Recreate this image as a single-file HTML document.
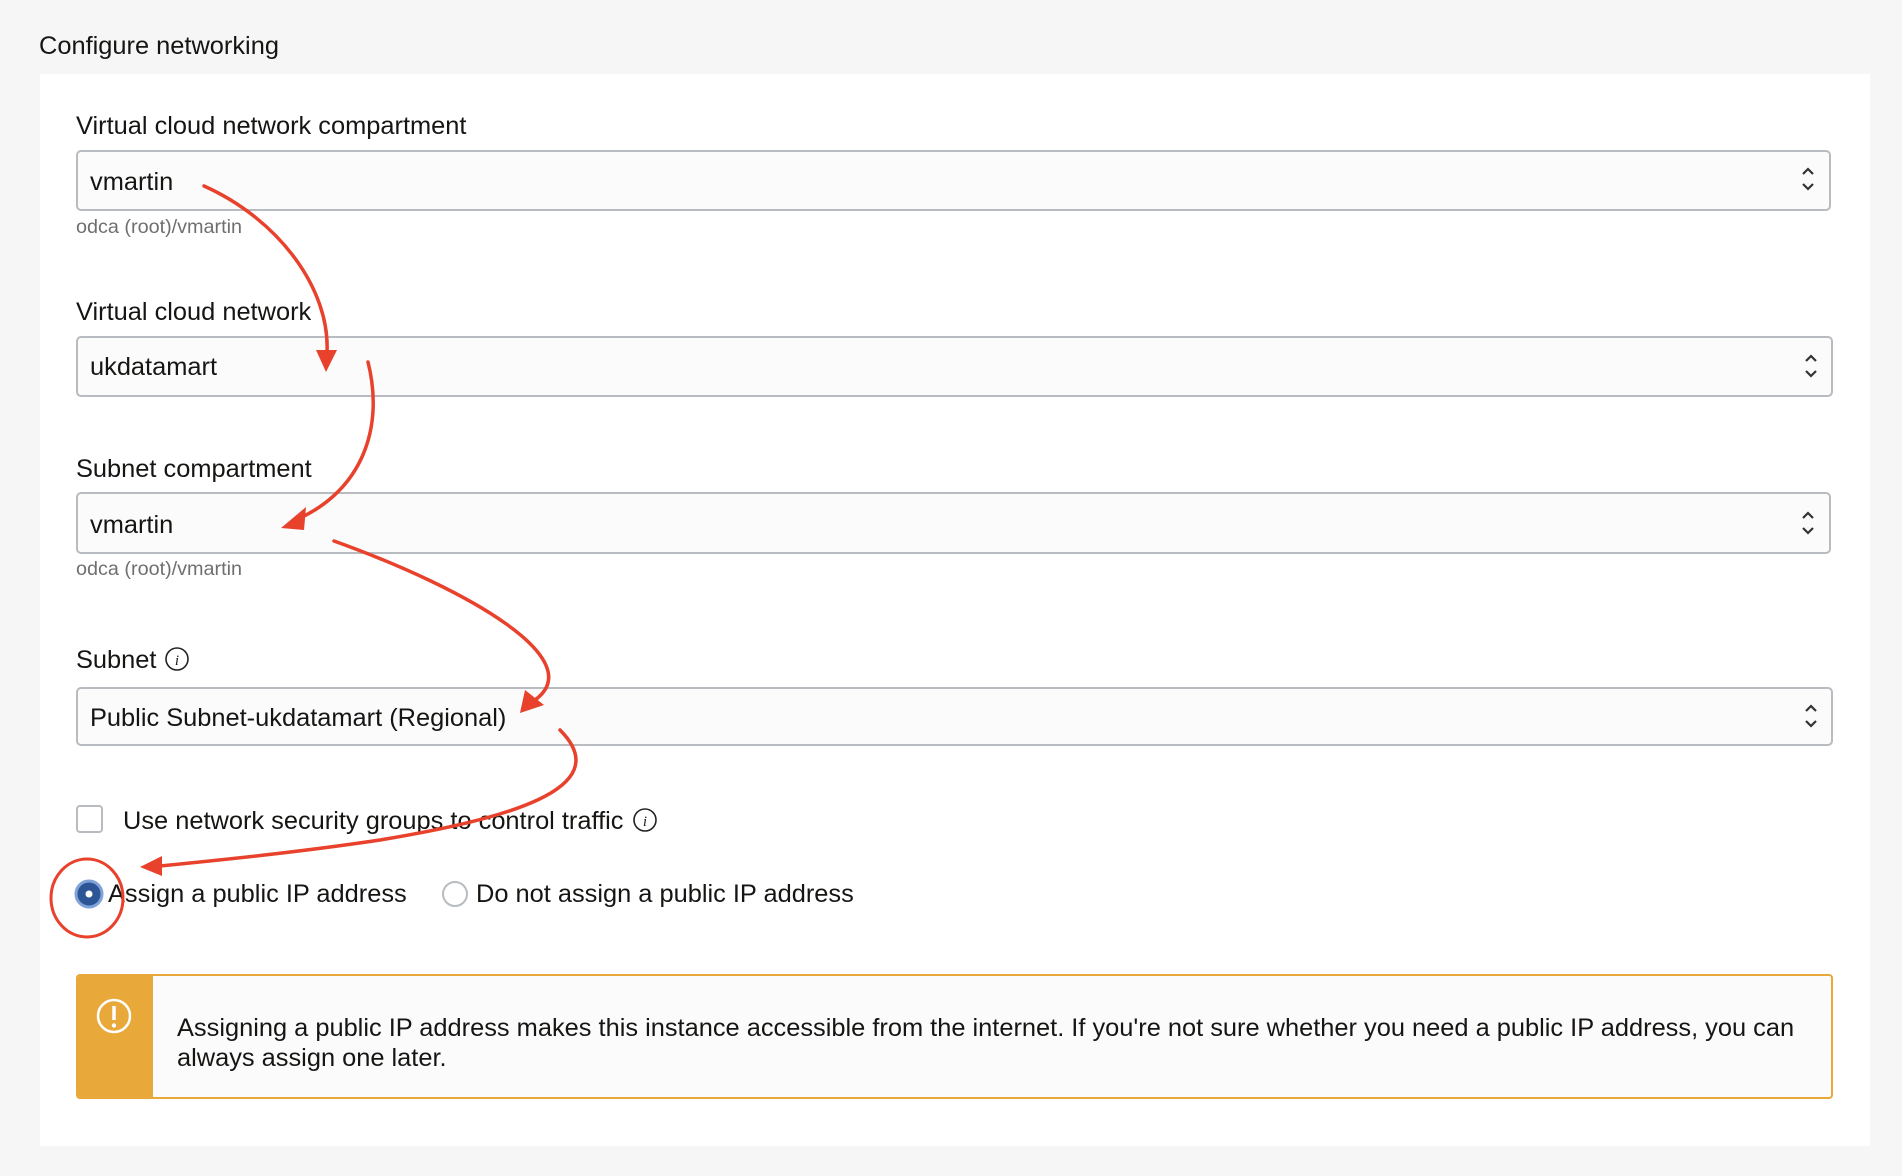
<!DOCTYPE html>
<html><head><meta charset="utf-8"><style>
*{margin:0;padding:0;box-sizing:border-box}
body{width:1902px;height:1176px;background:#f6f6f6;font-family:"Liberation Sans",Arial,sans-serif;color:#161513;position:relative;overflow:hidden}
.a{position:absolute;white-space:nowrap}
.t{font-size:25.4px;line-height:28px}
.panel{position:absolute;left:40px;top:74px;width:1830px;height:1072px;background:#fff}
.inp{position:absolute;left:76px;border:2px solid #b8bbbf;border-radius:5px;background:#fbfbfb}
.hint{font-size:19.8px;color:#6f6f6f}
.chev{position:absolute;width:14px;height:30px}
.ic{display:inline-block;vertical-align:middle;margin-left:8px;margin-top:-4px}
</style></head><body>
<div class="a" style="left:39px;top:32px;font-size:25.4px;line-height:28px">Configure networking</div>
<div class="panel"></div>

<div class="a t" style="left:76px;top:112px">Virtual cloud network compartment</div>
<div class="inp" style="top:150px;width:1755px;height:61px"></div>
<div class="a t" style="left:90px;top:168px">vmartin</div>
<svg class="chev" style="left:1801px;top:164px" viewBox="0 0 14 30"><path d="M2 10 L7 5 L12 10 M2 20 L7 25 L12 20" fill="none" stroke="#333" stroke-width="2.2"/></svg>
<div class="a hint" style="left:76px;top:216px">odca (root)/vmartin</div>

<div class="a t" style="left:76px;top:298px">Virtual cloud network</div>
<div class="inp" style="top:336px;width:1757px;height:61px"></div>
<div class="a t" style="left:90px;top:353px">ukdatamart</div>
<svg class="chev" style="left:1804px;top:351px" viewBox="0 0 14 30"><path d="M2 10 L7 5 L12 10 M2 20 L7 25 L12 20" fill="none" stroke="#333" stroke-width="2.2"/></svg>

<div class="a t" style="left:76px;top:455px">Subnet compartment</div>
<div class="inp" style="top:492px;width:1755px;height:62px"></div>
<div class="a t" style="left:90px;top:511px">vmartin</div>
<svg class="chev" style="left:1801px;top:508px" viewBox="0 0 14 30"><path d="M2 10 L7 5 L12 10 M2 20 L7 25 L12 20" fill="none" stroke="#333" stroke-width="2.2"/></svg>
<div class="a hint" style="left:76px;top:558px">odca (root)/vmartin</div>

<div class="a t" style="left:76px;top:646px">Subnet<svg class="ic" width="26" height="26" viewBox="0 0 26 26"><circle cx="13" cy="13" r="11" fill="none" stroke="#222" stroke-width="1.6"/><text x="13" y="19" font-family="Liberation Serif" font-style="italic" font-size="15" text-anchor="middle" fill="#222">i</text></svg></div>
<div class="inp" style="top:687px;width:1757px;height:59px"></div>
<div class="a t" style="left:90px;top:704px">Public Subnet-ukdatamart (Regional)</div>
<svg class="chev" style="left:1804px;top:701px" viewBox="0 0 14 30"><path d="M2 10 L7 5 L12 10 M2 20 L7 25 L12 20" fill="none" stroke="#333" stroke-width="2.2"/></svg>

<div class="a" style="left:76px;top:805px;width:27px;height:28px;border:2px solid #b8bbbf;border-radius:4px;background:#fff"></div>
<div class="a t" style="left:123px;top:807px">Use network security groups to control traffic<svg class="ic" width="26" height="26" viewBox="0 0 26 26"><circle cx="13" cy="13" r="11" fill="none" stroke="#222" stroke-width="1.6"/><text x="13" y="19" font-family="Liberation Serif" font-style="italic" font-size="15" text-anchor="middle" fill="#222">i</text></svg></div>

<svg class="a" style="left:74px;top:879px" width="30" height="30" viewBox="0 0 30 30"><circle cx="15" cy="15" r="13" fill="#2c5595" stroke="#7fa3d8" stroke-width="3"/><circle cx="15" cy="15" r="3.5" fill="#fff"/></svg>
<div class="a t" style="left:108px;top:880px">Assign a public IP address</div>
<svg class="a" style="left:441px;top:880px" width="28" height="28" viewBox="0 0 28 28"><circle cx="14" cy="14" r="12" fill="#fff" stroke="#b8bbbf" stroke-width="2"/></svg>
<div class="a t" style="left:476px;top:880px">Do not assign a public IP address</div>

<div class="a" style="left:76px;top:974px;width:1757px;height:125px;border:2px solid #e8a83a;border-radius:4px;background:#fbfbfb;overflow:hidden">
 <div style="position:absolute;left:0;top:0;width:75px;height:100%;background:#e8a83a"></div>
</div>
<svg class="a" style="left:95px;top:997px" width="38" height="38" viewBox="0 0 38 38"><circle cx="19" cy="19" r="16" fill="none" stroke="#fff" stroke-width="2.5"/><path d="M19 9 V23" stroke="#fff" stroke-width="3.5"/><circle cx="19" cy="28.5" r="2.2" fill="#fff"/></svg>
<div class="a t" style="left:177px;top:1013px;line-height:30px;white-space:normal;width:1640px">Assigning a public IP address makes this instance accessible from the internet. If you're not sure whether you need a public IP address, you can always assign one later.</div>

<svg class="a" style="left:0;top:0" width="1902" height="1176" viewBox="0 0 1902 1176">
<g fill="none" stroke="#e8412c" stroke-width="3.5" stroke-linecap="round">
<path d="M204 186 C280 220 330 290 327 352"/>
<path d="M368 362 C385 430 360 490 300 518"/>
<path d="M334 541 C470 590 590 660 535 700"/>
<path d="M560 730 C620 790 500 820 380 840 C300 852 220 860 160 866"/>
<ellipse cx="87" cy="898" rx="36" ry="39" stroke-width="3"/>
</g>
<g fill="#e8412c">
<polygon points="316,350 337,350 326,372"/>
<polygon points="306,507 304,530 281,528"/>
<polygon points="525,690 544,705 520,713"/>
<polygon points="162,856 162,876 140,867"/>
</g>
</svg>
</body></html>
